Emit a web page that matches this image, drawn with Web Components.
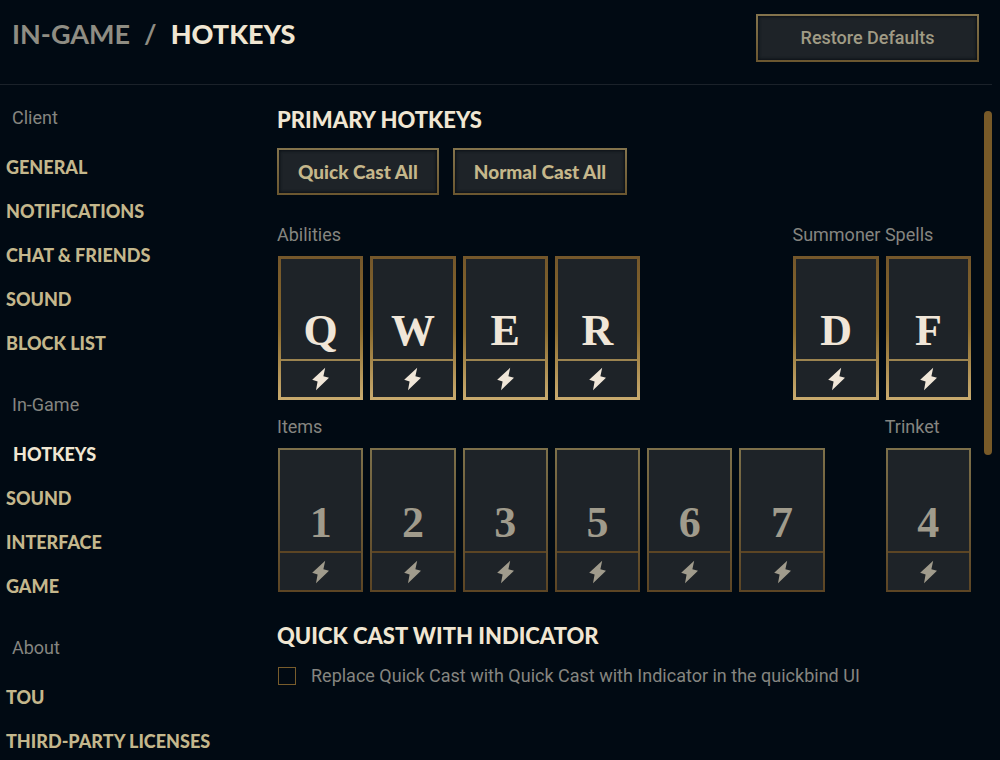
<!DOCTYPE html>
<html lang="en">
<head>
<meta charset="utf-8">
<title>Settings - Hotkeys</title>
<style>
  html { background: #010a13; }
  body { margin: 0; }
</style>
</head>
<body>
<settings-page></settings-page>

<script>
const define = (name, html, setup) => {
  const template = document.createElement('template');
  template.innerHTML = html;
  customElements.define(name, class extends HTMLElement {
    constructor() {
      super();
      this.attachShadow({ mode: 'open' });
    }
    connectedCallback() {
      if (this.shadowRoot.firstChild) return;
      this.shadowRoot.append(template.content.cloneNode(true));
      if (setup) setup(this, this.shadowRoot);
    }
  });
};

/* Framed button; its label is slotted */
define('gold-button', `
  <style>
    :host { display: block; }
    button {
      box-sizing: border-box; width: 100%; height: 47px; padding: 0 19px;
      border: 2px solid; border-image: linear-gradient(#83734c, #6b5730) 1;
      background: #1e2328; color: #c5b78b;
      box-shadow: inset 0 0 3px 1px #0b1016;
      font: 900 19px/24px var(--display); white-space: nowrap; cursor: pointer;
    }
    :host([plain]) button { height: 48px; font: 500 18px/24px var(--body); color: #a09b85; }
  </style>
  <button type="button"><slot></slot></button>
`);

/* Sidebar link */
define('nav-item', `
  <style>
    :host { display: block; }
    a {
      display: block; padding-left: 6px; font: 900 18px/44px var(--display);
      color: #c4b78c; text-decoration: none; white-space: nowrap;
    }
    :host([current]) a { padding-left: 13px; color: #f0e6d2; }
  </style>
  <a href="#"><slot></slot></a>
`, (host, root) => {
  if (host.hasAttribute('current')) root.querySelector('a').setAttribute('aria-current', 'page');
});

/* Titled group of sidebar links */
define('nav-group', `
  <style>
    :host { display: block; margin-bottom: 13px; }
    h3 { margin: 0; padding-left: 12px; font: 400 18px/54px var(--body); color: #858580; }
  </style>
  <h3><slot name="title"></slot></h3>
  <slot></slot>
`);

/* One key binding: the key on top, the quick cast toggle below */
define('key-card', `
  <style>
    :host {
      box-sizing: border-box; display: grid; grid-template-rows: 1fr 2px 37px;
      height: 144px; border: 2px solid;
      border-image: linear-gradient(#7d704a, #5c4524) 1;
      background: #1e2328; color: #a09b8c; --line: #5c4524;
    }
    :host([bound]) {
      grid-template-rows: 1fr 2px 36px;
      border-width: 3px; border-image: linear-gradient(#74572b, #8a6a2c 50%, #c8aa6e) 1;
      color: #f0e6d8; --line: #9c8450;
    }
    button {
      display: flex; justify-content: center; border: 0; margin: 0; padding: 0;
      background: none; color: inherit; cursor: pointer;
    }
    .key { align-items: flex-end; padding-bottom: 4px; font: 700 44px/48px "Liberation Serif", serif; }
    .cast { align-items: center; }
    i { background: var(--line); }
    svg { width: 19px; height: 24px; fill: currentColor; }
  </style>
  <button type="button" class="key"><slot></slot></button>
  <i></i>
  <button type="button" class="cast" aria-label="Quick cast">
    <svg viewBox="0 0 19 24"><path d="M14.2 .8 1.2 12.8l5.4 1.6L5 23.2 18 10.8l-5.6-1.6z"/></svg>
  </button>
`);

/* Labelled set of key cards, as wide as its number of cards asks */
define('key-group', `
  <style>
    :host {
      display: block; box-sizing: border-box;
      width: calc((100% - 98px) / 7 * var(--n) + var(--n) * 7px - 5px);
    }
    h3 { margin: 0 0 10px; font: 400 18px/22px var(--body); color: #858580; white-space: nowrap; }
    div { display: grid; grid-template-columns: repeat(var(--n), minmax(0, 1fr)); gap: 7px; padding: 0 1px; }
  </style>
  <h3></h3>
  <div></div>
`, (host, root) => {
  const keys = host.getAttribute('keys').split(' ');
  host.style.setProperty('--n', keys.length);
  root.querySelector('h3').textContent = host.getAttribute('label');
  root.querySelector('div').append(...keys.map(key => {
    const card = document.createElement('key-card');
    card.textContent = key;
    if (host.hasAttribute('bound')) card.setAttribute('bound', '');
    return card;
  }));
});

define('key-row', `
  <style>
    :host { display: flex; justify-content: space-between; margin-bottom: 16px; }
  </style>
  <slot></slot>
`);

define('check-option', `
  <style>
    :host { display: block; }
    label {
      display: flex; align-items: center; gap: 15px; padding-left: 1px;
      font: 400 18px/24px var(--body); color: #858580;
    }
    input {
      appearance: none; box-sizing: border-box; flex: none; margin: 0;
      width: 18px; height: 18px; border: 1px solid #785c2c; background: #010a13;
    }
    input:checked { background: #c8aa6e; }
  </style>
  <label><input type="checkbox"><span><slot></slot></span></label>
`);

define('page-header', `
  <style>
    :host {
      display: flex; justify-content: space-between; align-items: flex-start;
      box-sizing: border-box; height: 85px; margin-right: 8px; padding: 14px 13px 0 12px;
      border-bottom: 1px solid #1b222a;
    }
    h1 { margin: 5px 0 0; display: flex; gap: 14px; font: 900 27px/30px var(--display); color: #f0e6d2; }
    .dim { font-weight: 700; color: #8f8d83; }
    gold-button { width: 223px; }
  </style>
  <h1><span class="dim">IN-GAME</span><span class="dim">/</span><span>HOTKEYS</span></h1>
  <gold-button plain>Restore Defaults</gold-button>
`);

define('side-nav', `
  <style>
    :host { display: block; padding-top: 6px; }
  </style>
  <nav>
    <nav-group><span slot="title">Client</span>
      <nav-item>GENERAL</nav-item><nav-item>NOTIFICATIONS</nav-item>
      <nav-item>CHAT &amp; FRIENDS</nav-item><nav-item>SOUND</nav-item><nav-item>BLOCK LIST</nav-item>
    </nav-group>
    <nav-group><span slot="title">In-Game</span>
      <nav-item current>HOTKEYS</nav-item><nav-item>SOUND</nav-item>
      <nav-item>INTERFACE</nav-item><nav-item>GAME</nav-item>
    </nav-group>
    <nav-group><span slot="title">About</span>
      <nav-item>TOU</nav-item><nav-item>THIRD-PARTY LICENSES</nav-item>
    </nav-group>
  </nav>
`);

define('hotkey-panel', `
  <style>
    :host { display: block; padding-top: 23px; }
    h2 { margin: 0 0 16px; font: 900 22px/24px var(--display); color: #f0e6d2; }
    .actions { display: flex; gap: 14px; margin-bottom: 29px; }
    .indicator { padding-top: 16px; }
  </style>
  <section>
    <h2>PRIMARY HOTKEYS</h2>
    <div class="actions">
      <gold-button>Quick Cast All</gold-button>
      <gold-button>Normal Cast All</gold-button>
    </div>
    <key-row>
      <key-group label="Abilities" keys="Q W E R" bound></key-group>
      <key-group label="Summoner Spells" keys="D F" bound></key-group>
    </key-row>
    <key-row>
      <key-group label="Items" keys="1 2 3 5 6 7"></key-group>
      <key-group label="Trinket" keys="4"></key-group>
    </key-row>
  </section>
  <section class="indicator">
    <h2>QUICK CAST WITH INDICATOR</h2>
    <check-option>Replace Quick Cast with Quick Cast with Indicator in the quickbind UI</check-option>
  </section>
`);

define('scroll-thumb', `
  <style>
    :host { display: block; padding-top: 26px; }
    div { height: 53%; border-radius: 4px; background: #785a28; }
  </style>
  <div></div>
`);

define('settings-page', `
  <style>
    :host {
      --display: Lato, sans-serif;
      --body: Roboto, sans-serif;
      display: flex; flex-direction: column; height: 100vh; overflow: hidden;
      background: #010a13;
    }
    page-header { flex: none; }
    main {
      flex: 1; min-height: 0; display: grid; overflow: hidden;
      grid-template-columns: 277px minmax(0, 1fr) 8px; grid-template-rows: minmax(0, 1fr);
      padding-right: 8px;
    }
    hotkey-panel { margin-right: 12px; }
  </style>
  <page-header></page-header>
  <main>
    <side-nav></side-nav>
    <hotkey-panel></hotkey-panel>
    <scroll-thumb></scroll-thumb>
  </main>
`);
</script>
</body>
</html>
